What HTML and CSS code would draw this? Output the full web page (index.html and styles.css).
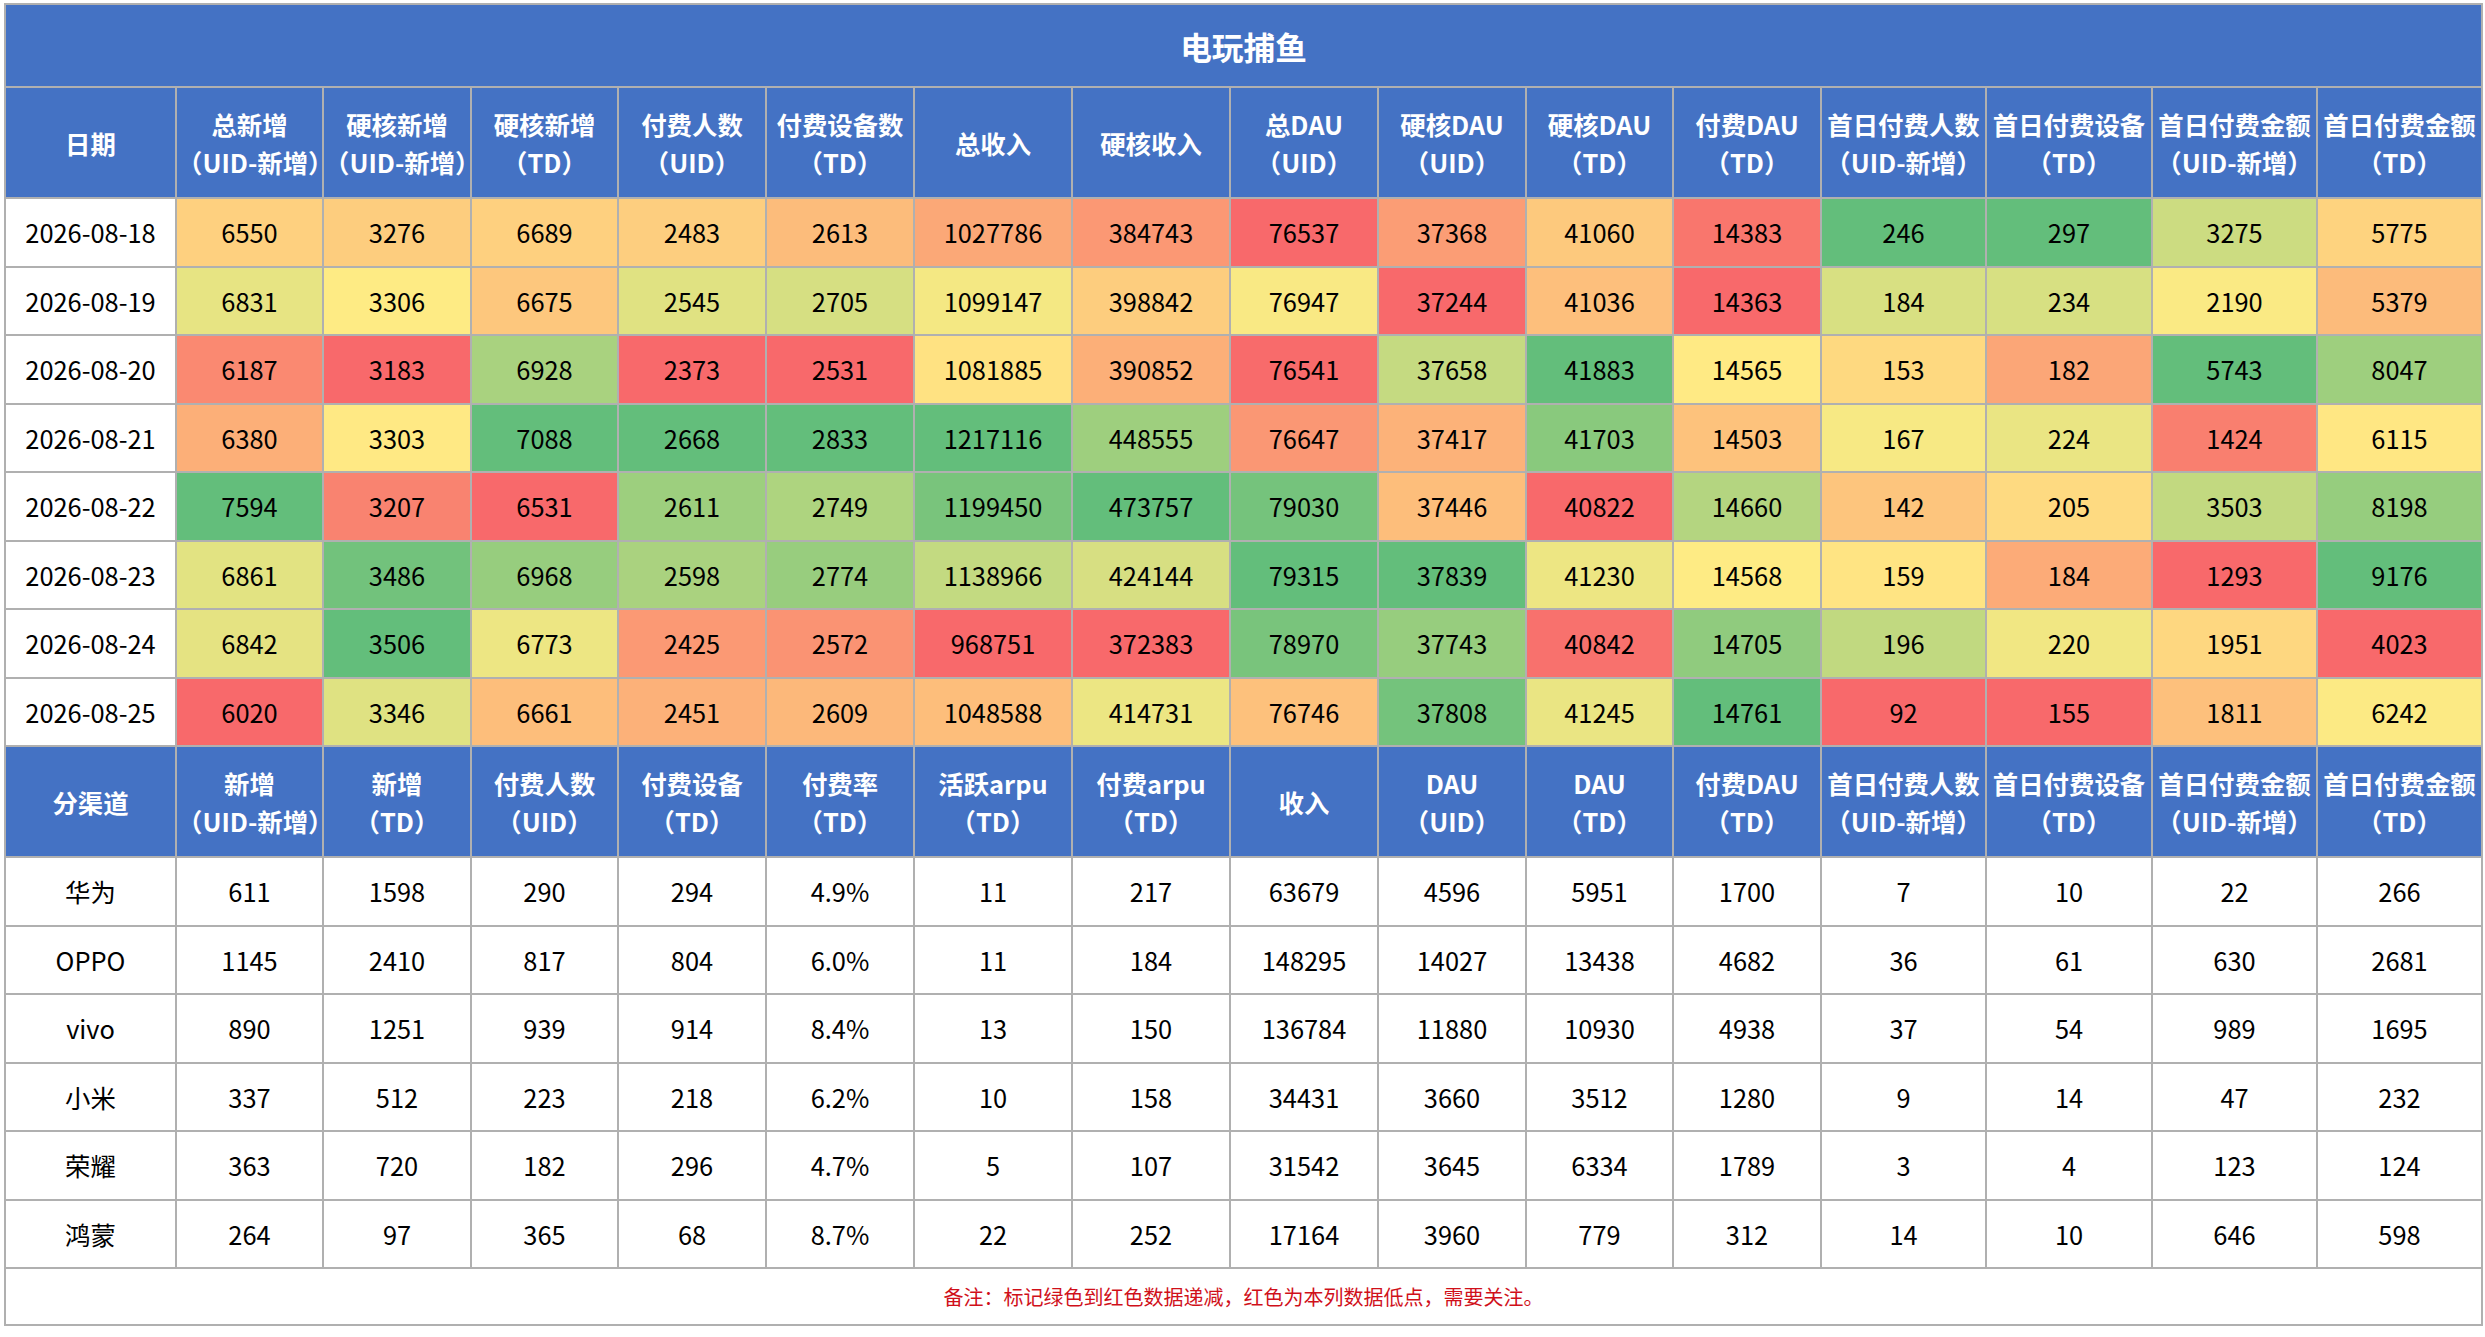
FILE: index.html
```
<!DOCTYPE html>
<html lang="zh-CN">
<head>
<meta charset="utf-8">
<title>电玩捕鱼</title>
<link rel="stylesheet" href="styles.css">
</head>
<body>
<div class="page">
<table class="report">
<colgroup>
<col class="c-first"><col class="c147"><col class="c148"><col class="c147"><col class="c148"><col class="c148"><col class="c158"><col class="c158"><col class="c148"><col class="c148"><col class="c147"><col class="c148"><col class="c165"><col class="c166"><col class="c165"><col class="c165">
</colgroup>
<thead>
<tr class="title"><th colspan="16">电玩捕鱼</th></tr>
<tr class="head">
<th>日期</th>
<th>总新增<br>（UID-新增）</th>
<th>硬核新增<br>（UID-新增）</th>
<th>硬核新增<br>（TD）</th>
<th>付费人数<br>（UID）</th>
<th>付费设备数<br>（TD）</th>
<th>总收入</th>
<th>硬核收入</th>
<th>总DAU<br>（UID）</th>
<th>硬核DAU<br>（UID）</th>
<th>硬核DAU<br>（TD）</th>
<th>付费DAU<br>（TD）</th>
<th>首日付费人数<br>（UID-新增）</th>
<th>首日付费设备<br>（TD）</th>
<th>首日付费金额<br>（UID-新增）</th>
<th>首日付费金额<br>（TD）</th>
</tr>
</thead>
<tbody class="scale">
<tr class="row"><td>2026-08-18</td><td>6550</td><td>3276</td><td>6689</td><td>2483</td><td>2613</td><td>1027786</td><td>384743</td><td>76537</td><td>37368</td><td>41060</td><td>14383</td><td>246</td><td>297</td><td>3275</td><td>5775</td></tr>
<tr class="row"><td>2026-08-19</td><td>6831</td><td>3306</td><td>6675</td><td>2545</td><td>2705</td><td>1099147</td><td>398842</td><td>76947</td><td>37244</td><td>41036</td><td>14363</td><td>184</td><td>234</td><td>2190</td><td>5379</td></tr>
<tr class="row"><td>2026-08-20</td><td>6187</td><td>3183</td><td>6928</td><td>2373</td><td>2531</td><td>1081885</td><td>390852</td><td>76541</td><td>37658</td><td>41883</td><td>14565</td><td>153</td><td>182</td><td>5743</td><td>8047</td></tr>
<tr class="row"><td>2026-08-21</td><td>6380</td><td>3303</td><td>7088</td><td>2668</td><td>2833</td><td>1217116</td><td>448555</td><td>76647</td><td>37417</td><td>41703</td><td>14503</td><td>167</td><td>224</td><td>1424</td><td>6115</td></tr>
<tr class="row"><td>2026-08-22</td><td>7594</td><td>3207</td><td>6531</td><td>2611</td><td>2749</td><td>1199450</td><td>473757</td><td>79030</td><td>37446</td><td>40822</td><td>14660</td><td>142</td><td>205</td><td>3503</td><td>8198</td></tr>
<tr class="row"><td>2026-08-23</td><td>6861</td><td>3486</td><td>6968</td><td>2598</td><td>2774</td><td>1138966</td><td>424144</td><td>79315</td><td>37839</td><td>41230</td><td>14568</td><td>159</td><td>184</td><td>1293</td><td>9176</td></tr>
<tr class="row"><td>2026-08-24</td><td>6842</td><td>3506</td><td>6773</td><td>2425</td><td>2572</td><td>968751</td><td>372383</td><td>78970</td><td>37743</td><td>40842</td><td>14705</td><td>196</td><td>220</td><td>1951</td><td>4023</td></tr>
<tr class="row"><td>2026-08-25</td><td>6020</td><td>3346</td><td>6661</td><td>2451</td><td>2609</td><td>1048588</td><td>414731</td><td>76746</td><td>37808</td><td>41245</td><td>14761</td><td>92</td><td>155</td><td>1811</td><td>6242</td></tr>
</tbody>
<tbody>
<tr class="head">
<th>分渠道</th>
<th>新增<br>（UID-新增）</th>
<th>新增<br>（TD）</th>
<th>付费人数<br>（UID）</th>
<th>付费设备<br>（TD）</th>
<th>付费率<br>（TD）</th>
<th>活跃arpu<br>（TD）</th>
<th>付费arpu<br>（TD）</th>
<th>收入</th>
<th>DAU<br>（UID）</th>
<th>DAU<br>（TD）</th>
<th>付费DAU<br>（TD）</th>
<th>首日付费人数<br>（UID-新增）</th>
<th>首日付费设备<br>（TD）</th>
<th>首日付费金额<br>（UID-新增）</th>
<th>首日付费金额<br>（TD）</th>
</tr>
</tbody>
<tbody class="channels">
<tr class="row"><td>华为</td><td>611</td><td>1598</td><td>290</td><td>294</td><td>4.9%</td><td>11</td><td>217</td><td>63679</td><td>4596</td><td>5951</td><td>1700</td><td>7</td><td>10</td><td>22</td><td>266</td></tr>
<tr class="row"><td>OPPO</td><td>1145</td><td>2410</td><td>817</td><td>804</td><td>6.0%</td><td>11</td><td>184</td><td>148295</td><td>14027</td><td>13438</td><td>4682</td><td>36</td><td>61</td><td>630</td><td>2681</td></tr>
<tr class="row"><td>vivo</td><td>890</td><td>1251</td><td>939</td><td>914</td><td>8.4%</td><td>13</td><td>150</td><td>136784</td><td>11880</td><td>10930</td><td>4938</td><td>37</td><td>54</td><td>989</td><td>1695</td></tr>
<tr class="row"><td>小米</td><td>337</td><td>512</td><td>223</td><td>218</td><td>6.2%</td><td>10</td><td>158</td><td>34431</td><td>3660</td><td>3512</td><td>1280</td><td>9</td><td>14</td><td>47</td><td>232</td></tr>
<tr class="row"><td>荣耀</td><td>363</td><td>720</td><td>182</td><td>296</td><td>4.7%</td><td>5</td><td>107</td><td>31542</td><td>3645</td><td>6334</td><td>1789</td><td>3</td><td>4</td><td>123</td><td>124</td></tr>
<tr class="row"><td>鸿蒙</td><td>264</td><td>97</td><td>365</td><td>68</td><td>8.7%</td><td>22</td><td>252</td><td>17164</td><td>3960</td><td>779</td><td>312</td><td>14</td><td>10</td><td>646</td><td>598</td></tr>
</tbody>
<tfoot>
<tr class="note"><td colspan="16">备注：标记绿色到红色数据递减，红色为本列数据低点，需要关注。</td></tr>
</tfoot>
</table>
</div>
<script src="script.js"></script>
</body>
</html>
```

FILE: styles.css
```
html, body {
  margin: 0;
  padding: 0;
  background: #ffffff;
}
body {
  font-family: "Noto Sans CJK SC", "Noto Sans", sans-serif;
}
.page {
  padding: 3px 4px;
}
.report {
  border-collapse: collapse;
  table-layout: fixed;
  width: 2477px;
  font-size: 25.4px;
  color: #000000;
}
.c-first { width: 171px; }
.c147 { width: 147px; }
.c148 { width: 148px; }
.c158 { width: 158px; }
.c165 { width: 165px; }
.c166 { width: 166px; }
.report th,
.report td {
  border: 2px solid #b0b0b0;
  padding: 0;
  text-align: center;
  vertical-align: middle;
  white-space: nowrap;
}
.title th {
  background: #4472c4;
  color: #ffffff;
  font-size: 31.7px;
  font-weight: 700;
  height: 81px;
}
.head th {
  background: #4472c4;
  color: #ffffff;
  font-weight: 700;
  height: 109px;
  line-height: 38px;
}
.row td {
  height: 66.5px;
  background: #ffffff;
}
.note td {
  height: 55px;
  color: #d0101a;
  font-size: 20px;
}
```

FILE: script.js
```
(function () {
  var RED = [248, 105, 107], YEL = [255, 235, 132], GRN = [99, 190, 123];
  function mix(a, b, t) {
    return 'rgb(' + a.map(function (v, i) { return Math.round(v + (b[i] - v) * t); }).join(',') + ')';
  }
  document.querySelectorAll('.report tbody.scale').forEach(function (tb) {
    var rows = Array.prototype.slice.call(tb.rows);
    var n = rows[0].cells.length;
    for (var c = 1; c < n; c++) {
      var vals = rows.map(function (r) { return parseFloat(r.cells[c].textContent); });
      var s = vals.slice().sort(function (a, b) { return a - b; });
      var min = s[0], max = s[s.length - 1];
      var k = 0.5 * (s.length - 1), lo = Math.floor(k), hi = Math.ceil(k);
      var mid = s[lo] + (s[hi] - s[lo]) * (k - lo);
      rows.forEach(function (r, i) {
        var v = vals[i], col;
        if (v <= mid) col = mix(RED, YEL, mid === min ? 1 : (v - min) / (mid - min));
        else col = mix(YEL, GRN, max === mid ? 1 : (v - mid) / (max - mid));
        r.cells[c].style.backgroundColor = col;
      });
    }
  });
})();
```
